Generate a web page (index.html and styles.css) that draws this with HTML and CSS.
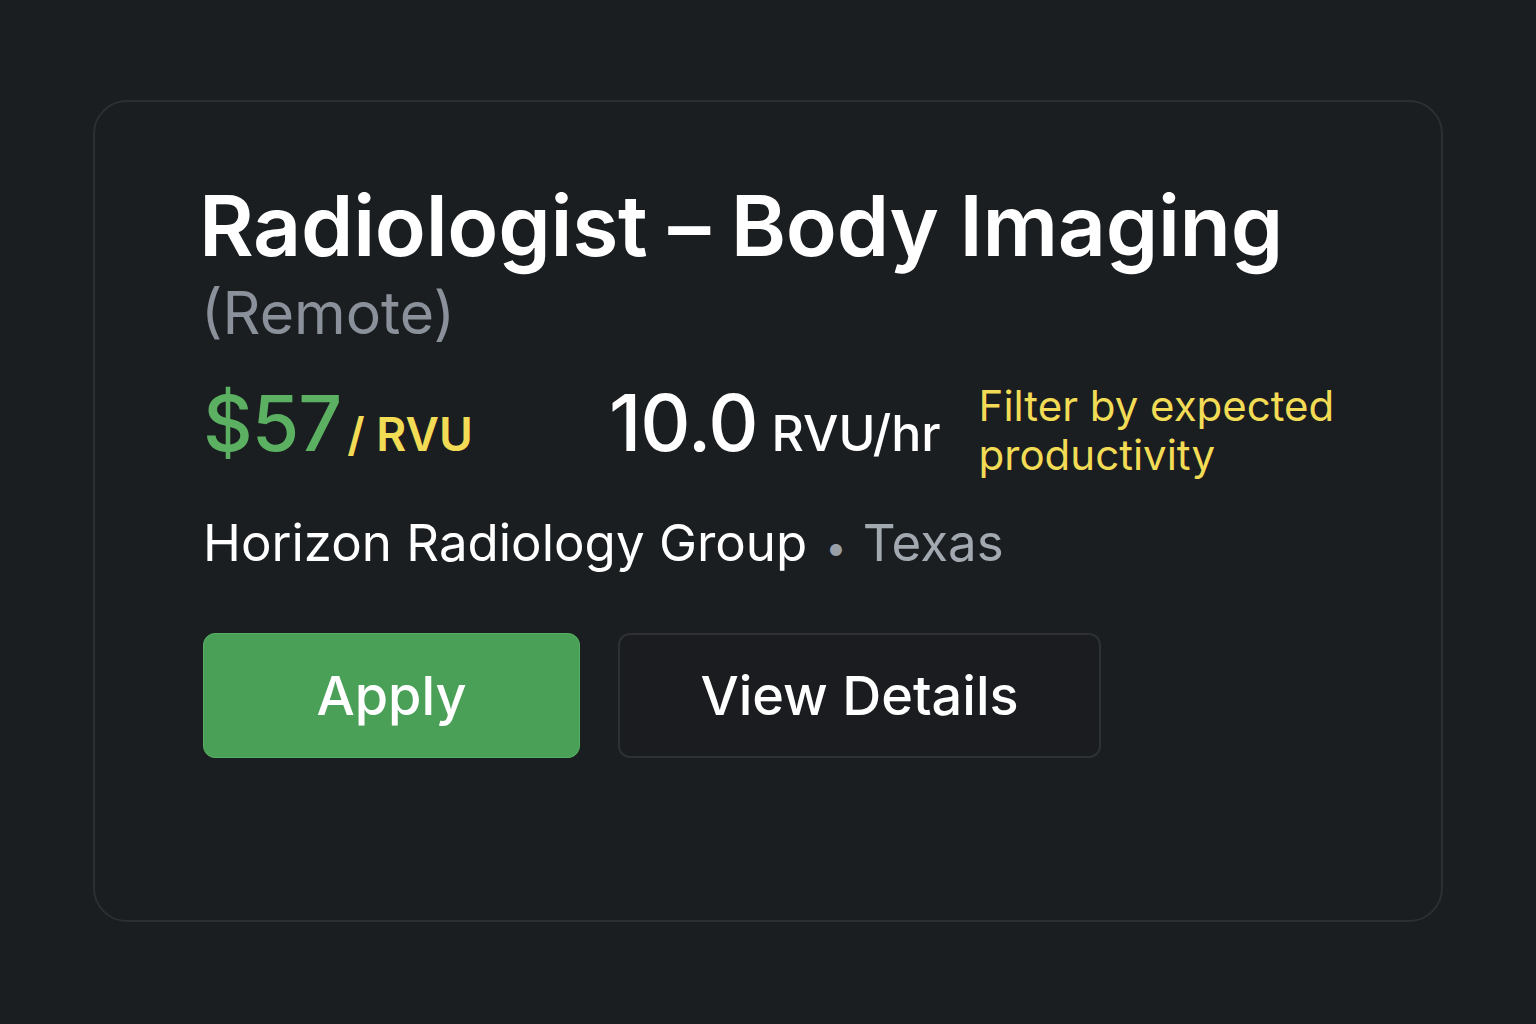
FILE: index.html
```html
<!DOCTYPE html>
<html lang="en">
<head>
<meta charset="utf-8">
<title>Job card</title>
<link rel="stylesheet" href="styles.css">
</head>
<body>
<main class="page">
  <section class="card">
    <h1 class="title">Radiologist – Body Imaging</h1>
    <div class="subtitle">(Remote)</div>
    <div class="metrics">
      <div class="rate"><span class="rate-value">$57</span><span class="rate-unit">/ RVU</span></div>
      <div class="prod"><span class="prod-value">10.0</span><span class="prod-unit">RVU/hr</span></div>
      <div class="hint">Filter by expected<br>productivity</div>
    </div>
    <div class="org"><span class="org-name">Horizon Radiology Group</span><span class="dot">•</span><span class="org-loc">Texas</span></div>
    <div class="actions">
      <button class="btn btn-apply">Apply</button>
      <button class="btn btn-details">View Details</button>
    </div>
  </section>
</main>
</body>
</html>
```
FILE: styles.css
```css
* { box-sizing: border-box; }
html, body { margin: 0; padding: 0; }
body {
  background: #1b1e21;
  font-family: Inter, "Noto Sans", sans-serif;
  width: 1536px;
  height: 1024px;
  overflow: hidden;
}
.page {
  padding: 100px 93px 0 93px;
}
.card {
  width: 1350px;
  height: 822px;
  border: 2px solid #2b2f33;
  border-radius: 34px;
  background: #1b1e21;
  padding: 64px 0 0 104px;
}
.title {
  margin: 0;
  font-size: 84px;
  font-weight: 600;
  color: #ffffff;
  letter-spacing: -0.3px;
  line-height: 120px;
}
.subtitle {
  font-size: 59px;
  color: #8b919a;
  line-height: 70px;
  margin-top: -8px;
  margin-left: 2px;
}
.metrics {
  display: flex;
  align-items: flex-start;
  margin-top: 27px;
  margin-left: 4px;
}
.rate {
  display: flex;
  align-items: baseline;
  width: 406px;
}
.rate-value {
  font-size: 77px;
  font-weight: 500;
  color: #5bb061;
  line-height: 96px;
  letter-spacing: -1px;
}
.rate-unit {
  font-size: 46px;
  font-weight: 600;
  color: #f3dc55;
  margin-left: 6px;
}
.prod {
  display: flex;
  align-items: baseline;
}
.prod-value {
  font-size: 78px;
  font-weight: 500;
  color: #ffffff;
  line-height: 96px;
  letter-spacing: -1px;
}
.prod-unit {
  font-size: 50px;
  font-weight: 500;
  color: #ffffff;
  margin-left: 14px;
}
.hint {
  font-size: 42px;
  color: #f3dc55;
  line-height: 49px;
  margin-left: 38px;
  margin-top: 6px;
}
.org {
  margin-top: 29px;
  margin-left: 4px;
  font-size: 51px;
  line-height: 70px;
  color: #ffffff;
  display: flex;
  align-items: baseline;
}
.dot {
  color: #9aa0a7;
  font-size: 38px;
  margin: 0 16px 0 18px;
}
.org-loc { color: #a3a9b0; }
.actions {
  display: flex;
  gap: 38px;
  margin-top: 51px;
  margin-left: 4px;
}
.btn {
  font-family: Inter, "Noto Sans", sans-serif;
  font-size: 54px;
  font-weight: 500;
  height: 125px;
  border-radius: 12px;
  color: #ffffff;
  cursor: pointer;
}
.btn-apply {
  width: 377px;
  background: #4ba058;
  border: 1px solid #56b062;
}
.btn-details {
  width: 483px;
  background: #1a1c1f;
  border: 2px solid #2d3136;
}
```
